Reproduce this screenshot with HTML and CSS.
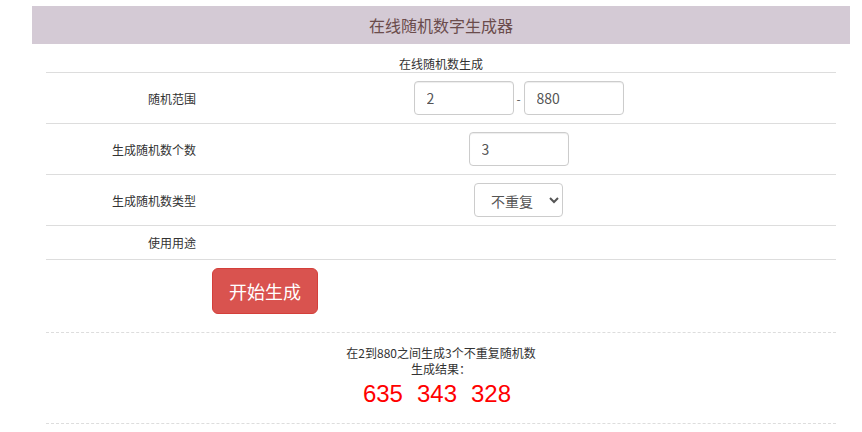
FILE: index.html
```html
<!DOCTYPE html>
<html lang="zh-CN">
<head>
<meta charset="utf-8">
<title>在线随机数字生成器</title>
<link rel="stylesheet" href="styles.css">
</head>
<body>
<div class="page">
  <div class="header">在线随机数字生成器</div>
  <div class="panel">
    <div class="caption">在线随机数生成</div>
    <div class="row">
      <div class="label">随机范围</div>
      <div class="field">
        <input class="input" type="text" value="2">
        <span class="dash">-</span>
        <input class="input" type="text" value="880">
      </div>
    </div>
    <div class="row">
      <div class="label">生成随机数个数</div>
      <div class="field">
        <input class="input" type="text" value="3">
      </div>
    </div>
    <div class="row">
      <div class="label">生成随机数类型</div>
      <div class="field">
        <select class="select">
          <option>不重复</option>
          <option>可重复</option>
        </select>
      </div>
    </div>
    <div class="row">
      <div class="label">使用用途</div>
      <div class="field"></div>
    </div>
    <div class="row">
      <div class="label"></div>
      <div class="field field-left">
        <button class="btn" type="button">开始生成</button>
      </div>
    </div>
    <div class="result">
      <div class="result-line">在2到880之间生成3个不重复随机数</div>
      <div class="result-line">生成结果：</div>
      <div class="numbers"><span>635</span><span>343</span><span>328</span></div>
    </div>
  </div>
</div>
</body>
</html>
```

FILE: styles.css
```css
html, body {
  margin: 0;
  padding: 0;
  background: #fff;
}
body {
  font-family: "Noto Sans CJK SC", "Liberation Sans", sans-serif;
  color: #333;
  font-size: 12px;
}
.page {
  margin: 6px 0 0 32px;
  width: 818px;
}
.header {
  height: 38px;
  background: #d4cad5;
  color: #6b4c4c;
  font-size: 16px;
  display: flex;
  align-items: center;
  justify-content: center;
}
.panel {
  margin: 0 14px;
  width: 790px;
}
.caption {
  padding-top: 12px;
  line-height: 16px;
  text-align: center;
  font-size: 12px;
  color: #333;
}
.row {
  display: grid;
  grid-template-columns: 158px 1fr;
  border-top: 1px solid #ddd;
}
.label {
  padding: 8px;
  text-align: right;
  align-self: center;
  font-size: 12px;
  line-height: 17px;
}
.field {
  padding: 8px 11px 8px 8px;
  display: flex;
  justify-content: center;
  align-items: center;
}
.field-left {
  justify-content: flex-start;
}
.input {
  box-sizing: border-box;
  width: 100px;
  height: 34px;
  padding: 6px 12px;
  border: 1px solid #ccc;
  border-radius: 4px;
  font-family: "Noto Sans CJK SC", "Liberation Sans", sans-serif;
  font-size: 14px;
  color: #555;
  background: #fff;
  box-shadow: inset 0 1px 1px rgba(0,0,0,.075);
}
.dash {
  width: 10px;
  text-align: center;
  font-size: 12px;
  color: #555;
}
.select {
  box-sizing: border-box;
  width: 89px;
  height: 34px;
  padding: 6px 8px 6px 12px;
  border: 1px solid #ccc;
  border-radius: 4px;
  font-family: "Noto Sans CJK SC", "Liberation Sans", sans-serif;
  font-size: 14px;
  color: #555;
  background: #fff;
}
.btn {
  box-sizing: border-box;
  height: 46px;
  width: 106px;
  padding: 0 16px;
  background: #d9534f;
  border: 1px solid #d43f3a;
  border-radius: 6px;
  color: #fff;
  font-family: "Noto Sans CJK SC", "Liberation Sans", sans-serif;
  font-size: 18px;
  line-height: 1;
}
.result {
  margin-top: 10px;
  border-top: 1px dashed #ddd;
  border-bottom: 1px dashed #ddd;
  padding: 12px 0 13px;
  text-align: center;
}
.result-line {
  font-size: 12px;
  line-height: 16px;
  color: #333;
}
.numbers {
  display: flex;
  justify-content: center;
  gap: 14px;
  padding-right: 8px;
  padding-top: 1px;
  font-family: "Liberation Sans", Arial, sans-serif;
  font-size: 24px;
  line-height: 32px;
  color: #f00;
}
```
